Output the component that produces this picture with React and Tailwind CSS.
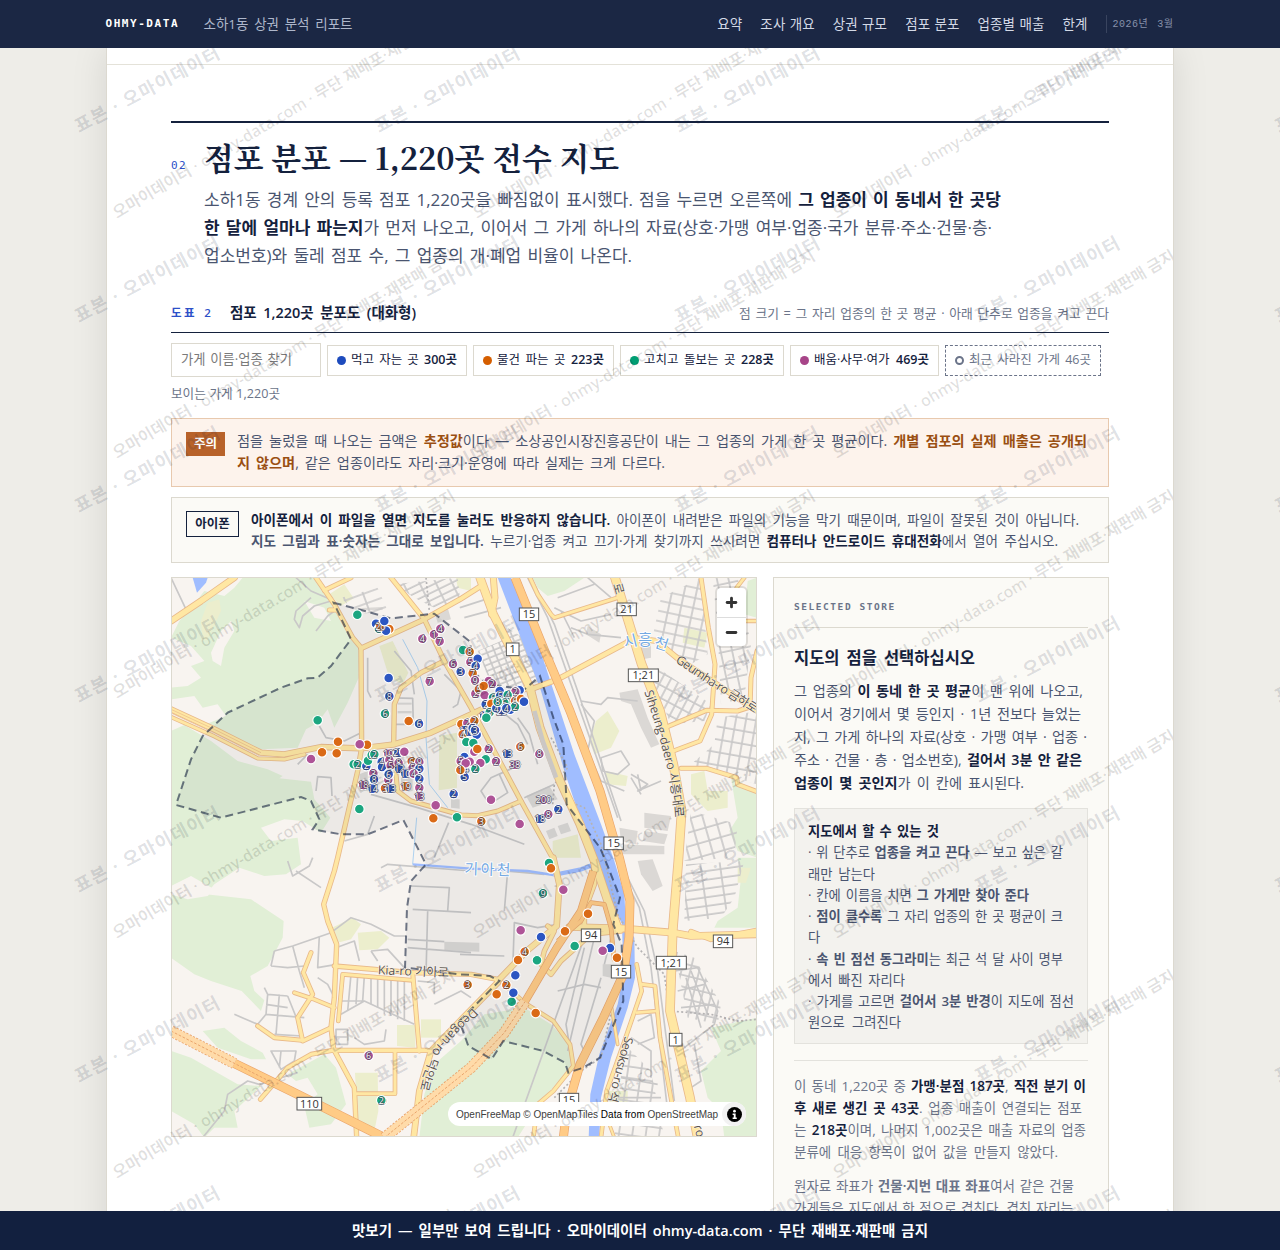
import { Plus, Minus } from 'lucide-react';

const NAV = ['요약', '조사 개요', '상권 규모', '점포 분포', '업종별 매출', '한계'];

const CHIPS = [
  { label: '먹고 자는 곳', count: '300곳', dot: 'bg-[#1d4bbd]', box: 'w-[140px]' },
  { label: '물건 파는 곳', count: '223곳', dot: 'bg-[#d55e00]', box: 'w-[141px]' },
  { label: '고치고 돌보는 곳', count: '228곳', dot: 'bg-[#009e73]', box: 'w-[164px]' },
  { label: '배움·사무·여가', count: '469곳', dot: 'bg-[#a74488]', box: 'w-[149px]' },
];

const COLORS = { b: '#2c56c2', o: '#da6a16', g: '#1ba680', p: '#ae5497' };

// x, y, group, stacked count
const MARKERS = [
  [559, 111, 'g'], [615, 138, 'b'], [655, 154, 'o'], [624, 153, 'g', 3], [645, 159, 'b'], [628, 146, 'o', 20], [640, 130, 'b'],
  [754, 183, 'p', 4], [789, 170, 'p', 1], [808, 153, 'p', 4], [806, 191, 'p', 7],
  [876, 217, 'g'], [896, 222, 'o', 8], [846, 259, 'p', 6], [898, 253, 'p', 5], [920, 243, 'b'], [914, 265, 'b', 4], [869, 282, 'b', 3],
  [653, 301, 'b'], [776, 311, 'p', 7], [655, 356, 'b', 8], [642, 408, 'g', 6], [713, 430, 'o'], [744, 438, 'b', 6],
  [440, 428, 'g'], [501, 492, 'o'], [588, 501, 'o'], [566, 500, 'p'], [453, 524, 'o'], [497, 527, 'o'], [420, 544, 'p'],
  [905, 287, 'o', 7], [912, 308, 'p', 9], [913, 348, 'p', 2], [924, 335, 'o', 5], [953, 310, 'p'], [963, 318, 'p', 2], [938, 325, 'o'], [941, 353, 'p'],
  [986, 340, 'b'], [1046, 338, 'b'], [1033, 342, 'p', 2], [966, 360, 'g', 6], [987, 355, 'b', 5], [1010, 352, 'g', 4], [944, 380, 'b', 2], [961, 378, 'o'],
  [1011, 370, 'g', 7], [1032, 370, 'o', 6], [1050, 364, 'o'], [1059, 372, 'b'], [994, 384, 'g', 5], [1018, 396, 'b'], [1032, 387, 'g', 2], [992, 401, 'b', 25],
  [940, 414, 'b', 12], [956, 404, 'g', 3], [946, 420, 'g'], [1000, 375, 'g', 6], [1006, 392, 'b', 4], [976, 392, 'b', 4], [980, 372, 'g', 8],
  [871, 439, 'o'], [889, 436, 'p', 2], [910, 429, 'o', 2], [880, 458, 'b', 15], [875, 470, 'o', 4], [895, 462, 'b', 18], [917, 471, 'b'], [905, 452, 'b', 5], [912, 458, 'b', 3],
  [886, 493, 'g'], [907, 496, 'g'], [910, 522, 'p'], [919, 514, 'o'], [953, 514, 'p', 2], [944, 545, 'g'], [928, 556, 'p'], [975, 551, 'p', 2],
  [880, 538, 'b'], [869, 550, 'p', 5], [878, 572, 'b', 24], [896, 552, 'p'], [884, 557, 'p'], [913, 574, 'g', 2], [881, 598, 'b', 5], [868, 577, 'o', 1],
  [1048, 507, 'o', 6], [1009, 529, 'b', 13], [1032, 561, 'p', 38], [1105, 529, 'p', 8],
  [548, 560, 'g'], [560, 560, 'g', 2], [586, 565, 'b', 2], [591, 549, 'g'], [602, 532, 'g', 2], [610, 530, 'g', 2], [632, 553, 'b', 4], [633, 568, 'b', 7],
  [652, 528, 'p', 10], [655, 547, 'p', 3], [682, 525, 'b', 27], [700, 522, 'p'], [659, 563, 'p', 5], [683, 556, 'p', 8], [685, 573, 'b', 12], [722, 551, 'o', 6],
  [745, 553, 'p', 9], [725, 570, 'p', 5], [745, 573, 'b', 5], [703, 588, 'b', 10], [728, 588, 'p', 4], [654, 588, 'b', 4], [607, 587, 'p', 3], [609, 605, 'b', 8],
  [652, 606, 'p', 5], [653, 590, 'b', 6], [745, 603, 'b', 2], [745, 630, 'p', 2], [577, 622, 'p', 18], [605, 633, 'b', 14], [642, 632, 'o', 3], [659, 633, 'b', 13],
  [704, 626, 'o', 19], [745, 656, 'p', 13], [848, 649, 'b', 2], [794, 683, 'p'], [787, 722, 'o'], [858, 719, 'g'], [565, 694, 'g'],
  [960, 666, 'p'], [931, 731, 'o', 3], [1046, 739, 'p'], [1118, 666, 'p', 200], [1162, 695, 'b', 2], [1132, 710, 'p', 8], [1107, 724, 'b', 18],
  [1134, 856, 'g'], [1140, 872, 'o'], [1116, 947, 'g', 9], [1177, 936, 'p'], [1251, 1008, 'o'], [1182, 1061, 'o'], [1049, 1058, 'p'], [1110, 1078, 'b'],
  [1211, 1105, 'g'], [1061, 1122, 'o', 4], [1041, 1147, 'o'], [1098, 1148, 'g'], [1317, 1111, 'b'], [1295, 1119, 'p'], [1338, 1140, 'o'],
  [1033, 1193, 'b'], [1006, 1222, 'o', 2], [977, 1250, 'o'], [890, 1221, 'o', 3], [1022, 1272, 'g'], [1027, 1245, 'b'], [1094, 1306, 'o'],
  [593, 1434, 'p', 6], [634, 1569, 'o'], [631, 1568, 'g', 2],
];

const FOREST = [
  'M0 180L25 130L60 90L100 40L160 55L190 30L215 0L430 0L475 60L500 100L545 185L565 215L563 300L530 375L490 450L470 395L440 435L405 455L380 510L270 515L170 470L105 440L165 415L140 380L95 390L70 355L0 365L0 330L50 325L90 300L60 265L100 250L60 205Z',
  'M0 460L40 442L120 490L200 550L290 575L335 595L325 602L420 612L430 665L478 720L450 765L395 730L340 725L270 750L300 790L380 780L390 860L345 890L280 895L205 870L130 920L105 950L240 965L338 1030L335 1080L290 1165L238 1195L250 1240L280 1268L270 1300L212 1240L120 1210L70 1190L0 1140Z',
  'M95 1360L160 1350L210 1390L275 1425L285 1445L240 1445L140 1410Z',
  'M0 1420L60 1440L130 1480L200 1520L270 1525L190 1600L200 1650L130 1650L100 1680L70 1640L0 1600Z',
  'M350 1490L460 1430L495 1470L525 1580L480 1640L415 1650L400 1585L440 1550L410 1500L375 1510Z',
  'M760 1550L790 1460L870 1390L940 1310L1060 1290L1140 1340L1195 1400L1200 1470L1110 1570L1040 1680L745 1680Z',
  'M1700 840L1758 840L1758 1050L1630 1050L1640 1030L1700 990L1710 900Z',
  'M1758 1320L1620 1350L1650 1420L1590 1480L1610 1560L1650 1600L1660 1680L1758 1680Z',
  'M1680 600L1758 640L1758 840L1700 820L1675 760L1700 720Z',
  'M1730 10L1758 0L1758 120L1720 110Z',
  'M1085 0L1240 0L1180 40L1130 55L1100 30Z',
];

// bare ground inside the woods
const CLEARINGS = [
  'M120 225L150 160L180 130L190 160L160 210L150 265L125 250Z', 'M0 210L50 235L60 265L0 262Z', 'M400 70L460 90L480 130L430 120Z', 'M0 925L60 895L130 935L110 955L50 965L0 950Z',
];

const PARKS = [
  'M625 205L665 190L712 285L695 320L655 300Z', 'M805 475L858 465L858 630L803 638Z', 'M475 50L520 20L548 62L510 85Z',
  'M483 1050L545 1020L570 1040L540 1085L500 1095Z', 'M560 1065L630 1060L655 1080L620 1115L565 1118Z',
  'M678 1342L733 1342L733 1410L678 1405Z', 'M750 1325L810 1325L810 1380L750 1380Z', 'M552 1485L620 1485L622 1600L610 1660L560 1660Z',
  'M1275 430L1310 400L1345 460L1320 510L1270 530L1255 490Z', 'M1305 580L1370 595L1365 625L1305 620Z', 'M1540 150L1610 165L1600 210L1535 195Z',
  'M1560 590L1600 580L1610 640L1670 640L1670 690L1610 700L1560 650Z', 'M1700 870L1740 870L1725 915L1700 915Z', 'M1310 1540L1370 1540L1370 1600L1320 1600Z',
  'M855 0L900 0L900 40L860 30Z', 'M1145 790L1220 770L1230 840L1145 840Z', 'M95 190L90 130L110 75L145 65L150 100L110 185Z',
];

const BLOCKS = [
  'M1065 655L1135 625L1160 665L1085 690Z', 'M1125 760L1150 750L1160 775L1135 785Z', 'M1160 745L1190 735L1200 760L1170 770Z',
  'M1345 345L1400 335L1430 420L1465 500L1440 510L1410 450L1380 380L1350 370Z', 'M1420 705L1500 715L1490 760L1420 750Z', 'M1420 760L1490 770L1480 800L1415 790Z',
  'M1345 750L1400 760L1395 800L1350 790Z', 'M1345 800L1480 805L1480 830L1345 830Z', 'M820 1092L925 1095L925 1122L820 1118Z', 'M1295 1160L1320 1160L1320 1200L1295 1195Z',
  'M1400 850L1445 845L1475 925L1445 940L1410 890Z', 'M840 665L866 665L866 693L840 690Z', 'M790 100L830 90L840 125L800 135Z', 'M565 590L590 580L590 640L568 640Z', 'M690 600L725 590L725 640L690 645Z',
  'M1250 145L1290 170L1285 195L1245 170Z', 'M1405 190L1440 200L1440 240L1415 245Z', 'M553 92L635 88L635 96L553 99Z', 'M680 375L722 375L722 381L680 381Z', 'M680 400L722 400L722 407L680 407Z',
];

const GREY = [
  'M0 0L45 95M490 70L420 40L375 0M480 70L430 85L395 115L385 150L370 125L375 100L420 60', 'M435 160L470 115L490 100',
  'M445 445L465 480L520 490L570 465M590 240L590 340L600 360', 'M670 220L720 280L730 350M820 290L870 340L860 380L845 390',
  'M435 640L440 597L480 600L483 655M380 560L410 530M600 650L740 690L900 740L1060 800M833 735L790 840',
  'M867 90L960 60M880 120L990 90M520 790L590 770L610 715', 'M640 360L725 362L727 440L675 440', 'M1050 560L960 600L930 640L955 680L1010 645L985 590Z',
  'M1060 660L1150 620M1040 420L1075 470L1100 560', 'M990 400L1040 440L1070 500', 'M350 850L365 895L415 865L425 840M375 880L450 930',
  'M310 1120L365 1105L480 1065L540 1020L600 1040L670 1075L705 1075M300 1165L350 1170L400 1165M310 1120L300 1165M365 1105L385 1180L400 1230M445 1075L440 1170L497 1160',
  'M495 1110L550 1090L565 1150M600 1120L650 1115L700 1170M620 1150L600 1120', 'M280 1230L290 1250L285 1310L260 1340L190 1310M290 1250L350 1255M325 1250L315 1370M350 1255L380 1330M285 1310L400 1320M310 1370L395 1375M285 1280L350 1290',
  'M440 1200L470 1220L490 1260M515 1185L505 1330M540 1190L530 1300M560 1195L555 1280M580 1195L575 1270M600 1200L600 1280M620 1205L620 1290M640 1205L640 1310M660 1205L660 1315M680 1210L680 1325M700 1210L700 1330',
  'M510 1270L580 1270L730 1340M510 1310L580 1270', 'M495 1355L530 1355L530 1400L495 1400ZM495 1378L530 1378', 'M550 1380L580 1400L640 1390L645 1355', 'M300 1420L375 1420L370 1450L330 1475ZM330 1420L325 1470',
  'M740 1210L790 1215L790 1250M790 1280L870 1240L900 1260', 'M95 1680L160 1600L170 1550L230 1510L265 1520L380 1485', 'M630 870L650 860L900 880M720 925L835 930L830 1000M725 995L900 1005M710 1085L820 1092M770 1000L765 1190M710 1110L900 1125',
  'M1010 880L1000 1000M1025 1180L1030 1035L1100 1050L1160 1040M867 1130L1000 1135M1005 880L1120 890', 'M1240 1110L1185 1340L1195 1400M1270 1080L1190 1420M1240 1080L1025 1680M1290 1200L1230 1400L1250 1440',
  'M1320 1080L1300 1160M1160 1240L1240 1220L1290 1230', 'M1230 370L1290 380L1310 360L1400 370M1230 380L1270 430L1250 520L1290 610L1360 640', 'M1290 540L1350 520L1375 560L1340 590L1295 580Z', 'M1380 590L1430 620L1400 640L1470 610M1380 600L1410 650M1400 590L1410 640',
  'M1200 150L1250 170L1350 180M1150 90L1230 130L1320 110M1160 60L1270 20M1250 0L1320 60M1170 100L1210 180',
  'M1340 840L1420 1000L1460 1180L1510 1570M1330 840L1405 990L1440 1170L1490 1600', 'M1070 0L1130 120L1200 320L1340 720M1080 0L1150 140L1220 340L1350 730',
  'M1400 1330L1440 1310L1450 1380L1400 1400M1380 1380L1440 1420L1440 1500M1350 1500L1460 1520M1340 1560L1470 1560',
  'M1510 1180L1580 1170L1640 1300L1630 1340L1540 1410M1520 1240L1600 1220M1530 1290L1630 1280M1545 1200L1590 1350M1560 1180L1610 1310M1570 1400L1590 1510L1560 1530',
];

const LATTICES = [
  { id: 'l1', d: 'M1010 150L1150 240L1110 310L1040 330L960 320L920 220L990 190Z', rot: -22, w: 22, h: 17 },
  { id: 'l2', d: 'M1470 60L1590 0L1610 230L1560 260L1440 200Z', rot: 12, w: 36, h: 30 },
  { id: 'l3', d: 'M1625 0L1700 0L1740 200L1720 360L1650 380L1640 160Z', rot: -12, w: 34, h: 40 },
  { id: 'l4', d: 'M1460 270L1620 380L1600 430L1500 440L1440 300Z', rot: 28, w: 24, h: 34 },
  { id: 'l5', d: 'M1640 420L1758 400L1758 620L1560 560L1630 500Z', rot: 10, w: 30, h: 38 },
  { id: 'l6', d: 'M1545 860L1720 850L1690 960L1650 1020L1540 1030Z', rot: -8, w: 58, h: 26 },
  { id: 'l7', d: 'M1560 700L1700 740L1690 840L1540 850Z', rot: -16, w: 36, h: 40 },
  { id: 'l8', d: 'M1570 1140L1650 1280L1640 1340L1550 1320L1510 1120Z', rot: 14, w: 26, h: 34 },
  { id: 'l9', d: 'M1360 1400L1440 1480L1480 1680L1330 1680Z', rot: 8, w: 40, h: 34 },
  { id: 'l10', d: 'M670 20L860 0L870 90L790 90L730 60Z', rot: -26, w: 44, h: 20 },
  { id: 'l11', d: 'M510 60L620 30L650 100L560 110Z', rot: -20, w: 58, h: 30 },
];

const YELLOW = [
  ['M0 130L90 70L190 0', 16], ['M460 38L540 0', 10], ['M475 97L496 97', 10],
  ['M435 0L490 80L545 180L570 210L572 510L560 580L500 840L490 880L458 980L470 1030L497 1100L490 1260L480 1350L488 1415L550 1530L557 1680', 11],
  ['M570 212L760 125L867 65L930 25', 12], ['M660 0L760 125L820 250L900 390L1050 670L1150 850', 11],
  ['M820 250L750 285L690 330L670 380L668 500', 11], ['M672 560L680 640L720 670L870 712L920 714L980 700L1050 670', 10],
  ['M0 395L130 455L270 525L340 530L450 508L570 512L670 500L780 465L900 410L1070 330', 14], ['M0 418L130 476L260 542L340 545L400 530', 8],
  ['M1085 333L1160 305L1367 195L1380 180L1457 190L1517 240L1755 398', 13],
  ['M1077 0L1100 50L1140 110L1150 120L1340 60', 9], ['M1590 0L1612 150L1632 260L1622 410L1587 490L1507 520', 10],
  ['M1482 450L1607 398L1700 400L1737 388L1740 300L1758 220', 10], ['M1530 572L1607 572L1697 600L1700 620L1758 642', 10], ['M1697 30L1720 0M1720 130L1758 130', 8],
  ['M490 1165L725 1185L900 1190L980 1205', 11], ['M502 1330L515 1190L725 1208', 9], ['M725 1185L745 1420', 10], ['M485 1418L770 1418', 11],
  ['M268 1565L350 1470L420 1430L485 1418', 10], ['M420 1125L397 1185L425 1250L380 1320L395 1390L480 1350', 10], ['M260 1345L310 1380L395 1388', 10],
  ['M370 1245L430 1265L490 1290', 9], ['M672 1420L672 1548L557 1548', 9], ['M980 1215L867 1330L780 1420L745 1540L728 1680', 15],
  ['M980 1210L1067 1120L1157 1045L1165 920L1147 840', 15], ['M995 1215L1060 1275L1147 1330L1197 1400L1207 1465L1147 1540L1100 1580L1087 1680', 9],
  ['M1130 1045L1150 1060L1120 1120L1110 1160L1140 1190L1170 1150L1260 1070L1350 1060', 11],
  ['M1397 1160L1412 1240L1357 1400L1307 1540L1290 1680', 9], ['M1412 1220L1452 1225L1467 1380L1507 1600L1522 1680', 9], ['M1397 1305L1457 1300', 8],
  ['M1320 1280L1340 1400M1300 1600L1330 1680', 6],
  ['M967 0L972 60L962 110', 16], ['M927 0L967 110L1077 330L1107 450L1167 610L1227 740L1270 850L1307 960L1340 1050', 22],
  ['M1267 840L1270 920L1240 1000L1240 1060L1330 1050', 12], ['M1195 1048L1350 1052L1507 1065L1560 1075L1758 1070', 18], ['M1560 1062L1620 1085L1758 1058', 12],
  ['M1332 0L1412 260L1467 400L1507 560L1532 700L1522 850L1505 1060L1497 1300L1557 1560L1580 1680', 24],
];

const ORANGE = [
  ['M190 1457L380 1550L640 1680', 24], ['M1060 1275L1157 1110L1230 1000L1267 880', 20], ['M1160 1090L1230 1030L1260 975L1300 980L1320 1050L1330 1150', 10],
  ['M1032 0L1117 210L1197 400L1287 640L1345 840L1377 970L1374 1080L1357 1190L1297 1320L1227 1460L1187 1600L1177 1680', 23],
];

const RIVER = 'M980 0L1020 0L1077 130L1125 270L1210 530L1290 740L1330 850L1360 950L1365 1040L1390 1080L1392 1200L1370 1290L1320 1440L1290 1560L1285 1680L1253 1680L1258 1550L1285 1430L1340 1280L1357 1190L1353 1040L1320 970L1290 870L1240 760L1180 580L1110 340L1030 130Z';

const DISTRICT = 'M488 75L600 105L660 122L790 108L895 190L905 230L915 290L950 320L1060 335L1107 295L1147 420L1177 500L1184 620L1187 680L1287 810L1312 870L1347 960L1327 1040L1352 1100L1357 1270L1287 1440L1237 1470L1192 1485L1182 1455L1117 1420L997 1390L962 1445L892 1405L865 1330L985 1210L957 1195L867 1190L702 1170L708 990L720 910L765 860L697 727L590 770L510 770L425 755L445 725L420 670L390 658L150 720L15 682L60 545L95 475L170 405L330 330L410 302L440 300L480 265L540 185Z';

const SHIELDS = [
  [1074, 110, '15', 58], [1025, 215, '1', 38], [1367, 95, '21', 58], [1417, 293, '1;21', 90], [1328, 797, '15', 58], [1260, 1073, '94', 58],
  [1656, 1091, '94', 58], [1501, 1155, '1;21', 90], [1350, 1182, '15', 58], [1514, 1386, '1', 38], [1194, 1566, '15', 58], [415, 1578, '110', 74],
];

const KR = '"Open Sans", "Noto Sans CJK KR", sans-serif';

const StoreMap = () => (
  <svg viewBox="3 1 1752 1674" className="block h-[558px] w-[584px]" fontFamily={KR}>
    <defs>
      {LATTICES.map((l) => (
        <pattern key={l.id} id={l.id} width={l.w} height={l.h} patternUnits="userSpaceOnUse" patternTransform={`rotate(${l.rot})`}>
          <path d={`M0 3H${l.w}M3 0V${l.h}`} stroke="#c9c8c8" strokeWidth="5" />
        </pattern>
      ))}
      <path id="siheung" d="M1420 342L1462 470L1494 590L1510 700L1518 800" />
      <path id="geumha" d="M1512 252L1600 312L1762 414" />
      <path id="deogan" d="M905 1290L850 1345L790 1410L755 1500L738 1570" />
      <path id="seoksu" d="M1362 1375L1330 1490L1296 1640" />
    </defs>
    <rect width="1758" height="1680" fill="#f8f4f0" />
    <g fill="#e1efd6">{FOREST.map((d) => <path key={d} d={d} />)}</g>
    <g fill="#f8f4f0">{CLEARINGS.map((d) => <path key={d} d={d} />)}</g>
    <g fill="#eceecd">{PARKS.map((d) => <path key={d} d={d} />)}</g>
    <g fill="#dbd8d5">{BLOCKS.map((d) => <path key={d} d={d} />)}</g>
    {LATTICES.map((l) => <path key={l.id} d={l.d} fill={`url(#${l.id})`} />)}
    <g fill="none" stroke="#c9c8c8" strokeWidth="5" strokeLinejoin="round">{GREY.map((d) => <path key={d} d={d} />)}</g>
    <path d="M65 0L78 45L105 15L110 0Z" fill="#a0bdff" />
    <path d={RIVER} fill="#a0bdff" />
    <path d="M725 860L900 873L1070 880L1147 892" fill="none" stroke="#a0bdff" strokeWidth="7" />
    <path d="M1147 892L1230 875L1310 845" fill="none" stroke="#a0bdff" strokeWidth="13" />
    <path d="M695 185L740 270L768 370L765 480L775 620L830 690M737 720L725 860" fill="none" stroke="#aed2f0" strokeWidth="3" />
    <path d="M1140 480L1190 570L1150 620L1145 680M1190 670L1240 690L1290 800L1340 1010L1400 1110L1480 1190L1495 1300L1620 1310L1700 1330L1758 1325M1330 1260L1290 1440L1230 1480L1150 1560M765 0L775 100" fill="none" stroke="#b5b3b4" strokeWidth="5" strokeDasharray="6 7" />
    <g fill="none" strokeLinejoin="round">
      {YELLOW.map(([d, w]) => <path key={d} d={d} stroke="#e9b98a" strokeWidth={w + 5} strokeLinecap="round" />)}
      {YELLOW.map(([d, w]) => <path key={d} d={d} stroke="#ffe7a3" strokeWidth={w} strokeLinecap="round" />)}
      <path d="M0 395L130 455L270 525M0 406L130 466L265 534" stroke="#e9b98a" strokeWidth="2" />
      <path d="M1090 400L1115 490L1155 600" stroke="#d5d0cc" strokeWidth="14" />
      {ORANGE.map(([d, w]) => <path key={d} d={d} stroke="#eaa56c" strokeWidth={w + 4} />)}
      {ORANGE.map(([d, w]) => <path key={d} d={d} stroke="#ffcb86" strokeWidth={w} />)}
      <path d="M0 1360L190 1457M640 1680L900 1470L1000 1365L1062 1272" stroke="#eaa56c" strokeWidth="34" strokeDasharray="7 4" />
      <path d="M0 1360L190 1457M640 1680L900 1470L1000 1365L1062 1272" stroke="#ffdba9" strokeWidth="29" />
      <path d="M0 1360L190 1457L310 1518M640 1680L900 1470L1000 1365L1062 1272" stroke="#eaa56c" strokeWidth="3" strokeDasharray="8 5" />
    </g>
    <path d={DISTRICT} fill="#14213d" fillOpacity=".05" stroke="#14213d" strokeOpacity=".6" strokeWidth="6" strokeDasharray="24 14" />
    <g fontSize="37" fill="#5b544e" stroke="#f8f4f0" strokeWidth="3" paintOrder="stroke">
      <text><textPath href="#siheung" textLength="390">Siheung-daero 시흥대로</textPath></text>
      <text><textPath href="#geumha" textLength="286">Geumha-ro 금하로</textPath></text>
      <text><textPath href="#deogan" textLength="300">Deogan-ro 덕안로</textPath></text>
      <text><textPath href="#seoksu" textLength="268">Seoksu-ro 석수로</textPath></text>
      <text x="620" y="1190" textLength="214" transform="rotate(2 620 1190)">Kia-ro 기아로</text>
      <text x="1325" y="20" transform="rotate(74 1325 20)">로</text>
      <text x="1568" y="1645" transform="rotate(75 1568 1645)">ro</text>
    </g>
    <g fontSize="45" fill="#74a9e2" stroke="#fff" strokeWidth="5" paintOrder="stroke">
      <text x="880" y="889" textLength="138" transform="rotate(2 880 889)">기아천</text>
      <text x="1362" y="212" transform="rotate(-14 1362 212)">시</text>
      <text x="1402" y="202">흥</text>
      <text x="1447" y="207" transform="rotate(18 1447 207)">천</text>
    </g>
    {SHIELDS.map(([x, y, t, w]) => (
      <g key={`${x}-${y}`}>
        <rect x={x - w / 2} y={y - 19} width={w} height="38" fill="#fff" stroke="#555" strokeWidth="3" />
        <text x={x} y={y + 12} fontSize="33" fill="#333" textAnchor="middle">{t}</text>
      </g>
    ))}
    {MARKERS.map(([x, y, c, n], i) => (
      <g key={i}>
        <circle cx={x} cy={y} r="14.5" fill={COLORS[c]} stroke="#fff" strokeWidth="3.5" />
        {n && (
          <text x={x} y={y + 10} fontSize="27" fill="#fff" stroke="#3a3a52" strokeOpacity=".75" strokeWidth="4.5" paintOrder="stroke" textAnchor="middle">{n}</text>
        )}
      </g>
    ))}
  </svg>
);

const range = (n) => Array.from({ length: n }, (_, i) => i);

const SampleMark = () => (
  <svg className="pointer-events-none absolute left-0 top-0 h-[1163px] w-[1280px]" viewBox="0 48 1280 1163" fontFamily={KR}>
    {range(5).map((c) => range(7).map((r) => (
      <text key={`${c}-${r}`} transform={`translate(${79 + c * 300} ${133 + r * 190}) rotate(-28)`} fontSize="18" fontWeight="700" fill="#14213d" fillOpacity=".15" textLength="161">
        표본 · 오마이데이터
      </text>
    )))}
  </svg>
);

const PaperMark = () => (
  <svg className="pointer-events-none absolute left-0 top-0 h-[1163px] w-[1066px]" viewBox="107 48 1066 1163" fontFamily={KR}>
    {range(3).map((c) => range(6).map((r) => (
      <text key={`${c}-${r}`} transform={`translate(${117 + c * 360} ${219 + r * 240}) rotate(-30.5)`} fontSize="16" fontWeight="600" fill="#000" fillOpacity=".12" textLength="394">
        오마이데이터 · ohmy-data.com · 무단 재배포·재판매 금지
      </text>
    )))}
  </svg>
);

// one typeset line; word gaps stretch to the given width
const Line = ({ className = '', children }) => (
  <span className={`block whitespace-nowrap [text-align-last:justify] ${className}`}>{children}</span>
);

const B = ({ children }) => <b className="font-semibold text-[#14213d]">{children}</b>;

const Header = () => (
  <header className="h-12 shrink-0 bg-[#1b2744]">
    <div className="mx-auto flex h-full w-[1069px] items-center pr-px">
      <b className="w-[98px] font-['DejaVu_Sans_Mono',monospace] text-[11px] tracking-[1.55px] text-white">OHMY-DATA</b>
      <Line className="w-[149px] text-[13.5px] text-[#aeb7cb]">소하1동 상권 분석 리포트</Line>
      <nav className="ml-auto flex gap-[18px] text-[13.5px] text-[#d3d9e6]">
        {NAV.map((item) => <a key={item} href="#" className="whitespace-nowrap tracking-[0.1px] [word-spacing:0.7px]">{item}</a>)}
      </nav>
      <span className="ml-[18px] h-[18px] w-px bg-[#39445f]" />
      <Line className="ml-1.5 w-[61px] font-['Liberation_Mono','Noto_Sans_CJK_KR',monospace] text-[10px] tracking-[0.5px] text-[#8792ab]">2026년 3월</Line>
    </div>
  </header>
);

const Sidebar = () => (
  <aside className="w-[336px] border border-[#dcd9cf] bg-[#fbfaf6] px-5">
    <div className="flex h-[50px] items-center border-b border-[#dcd9cf] pt-[9px] font-['DejaVu_Sans_Mono',monospace] text-[9.5px] font-bold tracking-[1.55px] text-[#6b7489]">SELECTED STORE</div>
    <Line className="mt-[18px] w-[181px] text-[16.5px] font-semibold leading-6 text-[#14213d]">지도의 점을 선택하십시오</Line>
    <div className="mt-[9px] text-[14.2px] leading-[23px] text-[#4a5570]">
      <Line className="w-[289px]">그 업종의 <B>이 동네 한 곳 평균</B>이 맨 위에 나오고,</Line>
      <Line className="w-[287px]">이어서 경기에서 몇 등인지 · 1년 전보다 늘었는</Line>
      <Line className="w-[293px]">지, 그 가게 하나의 자료(상호 · 가맹 여부 · 업종 ·</Line>
      <Line className="w-[288px]">주소 · 건물 · 층 · 업소번호), <B>걸어서 3분 안 같은</B></Line>
      <Line className="w-[230px]"><B>업종이 몇 곳인지</B>가 이 칸에 표시된다.</Line>
    </div>
    <div className="mt-[14px] h-[236px] border border-[#e3e2dd] bg-[#f3f2ee] px-[13px] pt-[12px] text-[13.3px] leading-[21.25px] text-[#4a5570]">
      <Line className="w-[131px]"><B>지도에서 할 수 있는 것</B></Line>
      <Line className="w-[255px]">· 위 단추로 <b className="font-semibold">업종을 켜고 끈다</b> — 보고 싶은 갈</Line>
      <Line className="w-[67px]">래만 남는다</Line>
      <Line className="w-[221px]">· 칸에 이름을 치면 <b className="font-semibold">그 가게만 찾아 준다</b></Line>
      <Line className="w-[255px]">· <b className="font-semibold">점이 클수록</b> 그 자리 업종의 한 곳 평균이 크</Line>
      <span className="block">다</span>
      <Line className="w-[255px]">· <b className="font-semibold">속 빈 점선 동그라미</b>는 최근 석 달 사이 명부</Line>
      <Line className="w-[97px]">에서 빠진 자리다</Line>
      <Line className="w-[266px]">· 가게를 고르면 <b className="font-semibold">걸어서 3분 반경</b>이 지도에 점선</Line>
      <Line className="w-[93px]">원으로 그려진다</Line>
    </div>
    <div className="mt-4 border-t border-[#e3e2dd] pt-[14px] text-[13.5px] leading-[22px] text-[#6b7489]">
      <Line className="w-[292px]">이 동네 1,220곳 중 <B>가맹·분점 187곳</B>, <B>직전 분기 이</B></Line>
      <Line className="w-[288px]"><B>후 새로 생긴 곳 43곳</B>. 업종 매출이 연결되는 점포</Line>
      <Line className="w-[292px]">는 <B>218곳</B>이며, 나머지 1,002곳은 매출 자료의 업종</Line>
      <Line className="w-[264px]">분류에 대응 항목이 없어 값을 만들지 않았다.</Line>
      <Line className="mt-3 w-[280px]">원자료 좌표가 <b className="font-semibold">건물·지번 대표 좌표</b>여서 같은 건물</Line>
      <Line className="w-[279px]">가게들은 지도에서 한 점으로 겹친다. 겹친 자리는</Line>
    </div>
  </aside>
);

export default function App() {
  return (
    <div className="flex h-[1250px] w-[1280px] flex-col overflow-hidden bg-[#eeede8] font-['Open_Sans','Noto_Sans_CJK_KR',sans-serif]">
      <Header />
      <main className="relative h-[1163px] overflow-hidden">
        <div className="relative mx-auto h-[1300px] w-[1068px] border-x border-[#dcd9d0] bg-white shadow-[0_0_34px_rgba(20,20,0,0.1)]">
          <div className="h-[17px] border-b border-[#e4e2d9]" />
          <section className="px-16 pt-14">
            <div className="border-t-2 border-[#14213d]">
              <div className="flex h-[63px] items-center pt-[4px]">
                <span className="w-[33px] pt-5 font-['DejaVu_Sans_Mono',monospace] text-[11px] tracking-[1.5px] text-[#2c50c8]">02</span>
                <h2 className="w-[415px] whitespace-nowrap font-['Noto_Serif_CJK_KR','Noto_Serif_KR','Liberation_Serif','Noto_Sans_CJK_KR',serif] text-[30.8px] font-bold leading-[44px] text-[#14213d] [text-align-last:justify]">점포 분포 — 1,220곳 전수 지도</h2>
              </div>
              <div className="ml-[33px] text-[17px] leading-7 text-[#4a5570]">
                <Line className="w-[797px]">소하1동 경계 안의 등록 점포 1,220곳을 빠짐없이 표시했다. 점을 누르면 오른쪽에 <B>그 업종이 이 동네서 한 곳당</B></Line>
                <Line className="w-[788px]"><B>한 달에 얼마나 파는지</B>가 먼저 나오고, 이어서 그 가게 하나의 자료(상호·가맹 여부·업종·국가 분류·주소·건물·층·</Line>
                <Line className="w-[428px]">업소번호)와 둘레 점포 수, 그 업종의 개·폐업 비율이 나온다.</Line>
              </div>
            </div>

            <div className="mt-[27px] flex h-[36px] items-center border-b border-[#14213d] pb-[3px]">
              <span className="w-[59px] text-[11.5px] font-semibold tracking-[2.4px] text-[#2c50c8] [word-spacing:2px]">도표 2</span>
              <Line className="w-[186px] text-[14.5px] font-semibold text-[#14213d]">점포 1,220곳 분포도 (대화형)</Line>
              <Line className="ml-auto w-[370px] pt-px text-[12.8px] text-[#6b7489]">점 크기 = 그 자리 업종의 한 곳 평균 · 아래 단추로 업종을 켜고 끈다</Line>
            </div>

            <div className="mt-[10px] flex items-center gap-1.5">
              <div className="flex h-[34px] w-[150px] items-center border border-[#dcd9cf] px-[9px] text-[13.3px] text-[#7a7a7a]">
                <Line className="w-[111px]">가게 이름·업종 찾기</Line>
              </div>
              {CHIPS.map((chip) => (
                <button key={chip.label} className={`flex h-[31px] items-center gap-[5px] border border-[#dcd9cf] px-[9px] text-[12.5px] text-[#14213d] ${chip.box}`}>
                  <i className={`h-[9px] w-[9px] shrink-0 rounded-full ${chip.dot}`} />
                  <Line className="flex-1">{chip.label} <b className="font-semibold">{chip.count}</b></Line>
                </button>
              ))}
              <button className="flex h-[31px] w-[156px] items-center gap-[5px] border border-dashed border-[#6b7489] px-[9px] text-[12.5px] text-[#6b7489]">
                <i className="h-[9px] w-[9px] shrink-0 rounded-full border-2 border-[#6b7489]" />
                <Line className="flex-1">최근 사라진 가게 46곳</Line>
              </button>
            </div>
            <Line className="mt-[7px] h-[20px] w-[109px] text-[12.6px] leading-5 text-[#6b7489]">보이는 가게 1,220곳</Line>

            <div className="mt-[14px] flex h-[69px] gap-3 border border-[#e8c9ae] bg-[#fdf3ec] px-[14px] pt-[11px]">
              <span className="mt-[2px] flex h-6 w-[39px] items-center justify-center bg-[#b8622a] text-[12.5px] font-semibold text-white">주의</span>
              <div className="text-[14.2px] leading-[22.4px] text-[#4a5570]">
                <Line className="w-[850px]">점을 눌렀을 때 나오는 금액은 <b className="font-semibold text-[#9a4f12]">추정값</b>이다 — 소상공인시장진흥공단이 내는 그 업종의 가게 한 곳 평균이다. <b className="font-semibold text-[#9a4f12]">개별 점포의 실제 매출은 공개되</b></Line>
                <Line className="w-[428px]"><b className="font-semibold text-[#9a4f12]">지 않으며</b>, 같은 업종이라도 자리·크기·운영에 따라 실제는 크게 다르다.</Line>
              </div>
            </div>

            <div className="mt-[10px] flex h-[66px] gap-3 border border-[#dcd9cf] bg-[#fbfaf6] px-[14px] pt-[11px]">
              <span className="mt-[2px] flex h-[26px] w-[53px] items-center justify-center border border-[#14213d] text-[12.5px] font-semibold text-[#14213d]">아이폰</span>
              <div className="text-[13.6px] leading-[21px] text-[#4a5570]">
                <Line className="w-[828px]"><B>아이폰에서 이 파일을 열면 지도를 눌러도 반응하지 않습니다.</B> 아이폰이 내려받은 파일의 기능을 막기 때문이며, 파일이 잘못된 것이 아닙니다.</Line>
                <Line className="w-[807px]"><b className="font-semibold">지도 그림과 표·숫자는 그대로 보입니다.</b> 누르기·업종 켜고 끄기·가게 찾기까지 쓰시려면 <B>컴퓨터나 안드로이드 휴대전화</B>에서 열어 주십시오.</Line>
              </div>
            </div>

            <div className="mt-[14px] flex gap-4">
              <div className="relative h-[560px] w-[586px] shrink-0 overflow-hidden border border-[#dcd9cf]">
                <StoreMap />
                <div className="absolute right-[10px] top-[10px] w-[29px] rounded bg-white text-[#333] shadow-[0_0_0_2px_rgba(0,0,0,0.1)]">
                  <button className="flex h-[30px] w-full items-center justify-center border-b border-[#ddd]"><Plus size={15} strokeWidth={4.5} /></button>
                  <button className="flex h-[28px] w-full items-center justify-center"><Minus size={15} strokeWidth={4.5} /></button>
                </div>
                <div className="absolute bottom-[10px] right-[10px] flex h-6 w-[298px] items-center rounded-xl bg-white pl-2 font-['Liberation_Sans',sans-serif] text-[10px] text-[#404040]">
                  <Line className="w-[262px]">OpenFreeMap © OpenMapTiles <span className="text-black">Data from</span> OpenStreetMap</Line>
                  <span className="ml-auto flex h-6 w-6 items-center justify-center rounded-full bg-[#f2f2f2]">
                    <svg viewBox="0 0 20 20" className="h-[15px] w-[15px]"><circle cx="10" cy="10" r="10" /><path d="M7.5 8.5H11.5V14H13V16H7.5V14H9V10.5H7.5Z" fill="#fff" /><circle cx="10" cy="5.5" r="1.8" fill="#fff" /></svg>
                  </span>
                </div>
              </div>
              <Sidebar />
            </div>
          </section>
          <PaperMark />
        </div>
        <SampleMark />
      </main>
      <footer className="flex h-[39px] shrink-0 items-center justify-center bg-[#12203f] text-[14.5px] font-semibold text-white">
        <Line className="w-[576px]">맛보기 — 일부만 보여 드립니다 · 오마이데이터 ohmy-data.com · 무단 재배포·재판매 금지</Line>
      </footer>
    </div>
  );
}
